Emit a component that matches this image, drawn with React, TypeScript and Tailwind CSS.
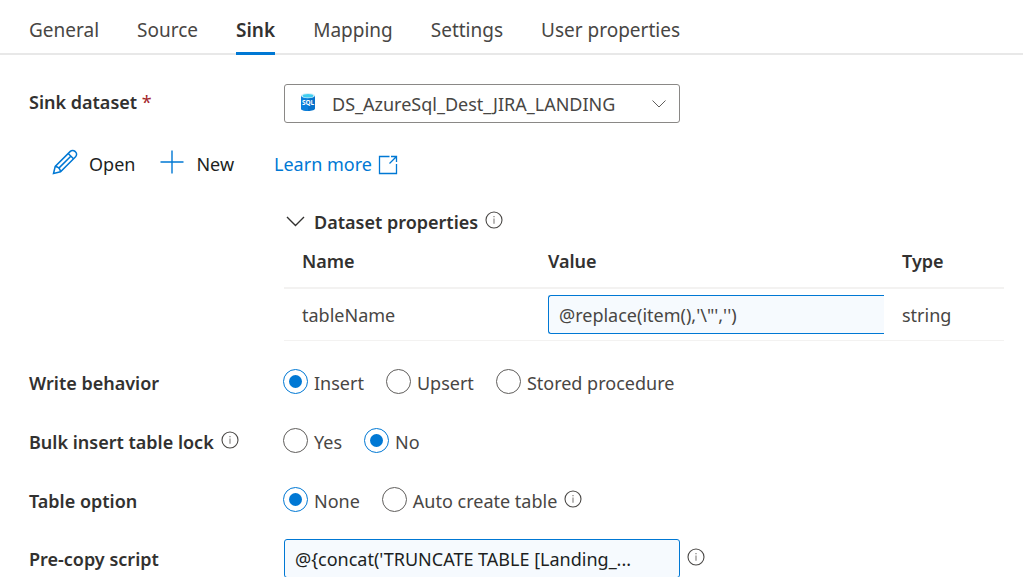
import { useState, type ReactNode } from "react";

const tabs = ["General", "Source", "Sink", "Mapping", "Settings", "User properties"];

function InfoIcon() {
  return (
    <svg viewBox="0 0 18 18" className="mb-[2px] size-[18px] shrink-0" fill="none" aria-hidden="true">
      <circle cx="9" cy="9" r="8" stroke="#4a4846" strokeWidth="1.1" />
      <path d="M9 7.4v5.4" stroke="#8a8886" strokeWidth="1.2" />
      <path d="M9 4.9v1.4" stroke="#8a8886" strokeWidth="1.3" />
    </svg>
  );
}

function SqlIcon() {
  return (
    <svg viewBox="0 0 16 20" className="h-5 w-4" aria-hidden="true">
      <path d="M1 3.5v13C1 18 4 19 8 19s7-1 7-2.5v-13z" fill="#0672cb" />
      <path d="M1 3.5v13C1 18 4 19 8 19V3.5z" fill="#0a7fdc" />
      <ellipse cx="8" cy="3.6" rx="7" ry="2.6" fill="#d9f1fa" />
      <ellipse cx="8" cy="3.7" rx="5.4" ry="1.8" fill="#3fcdf0" />
      <text x="8" y="13.2" textAnchor="middle" fontSize="6.4" fontWeight="700" fill="#fff" fontFamily="Open Sans, sans-serif">
        SQL
      </text>
    </svg>
  );
}

function PencilIcon() {
  return (
    <svg viewBox="0 0 26 26" className="mb-1 size-[26px]" fill="none" stroke="#0078d4" strokeWidth="1.5" aria-hidden="true">
      <path d="M1.5 24.5l1.7-7L18.3 2.4a3.3 3.3 0 0 1 4.7 0l.6.6a3.3 3.3 0 0 1 0 4.7L8.5 22.8z" />
      <path d="M3.2 17.5c2.8.2 5 2.5 5.3 5.3M16.2 4.5l5.3 5.3M18.8 7.2L6.3 19.6" />
    </svg>
  );
}

function PlusIcon() {
  return (
    <svg viewBox="0 0 24 24" className="mb-[5px] size-6" stroke="#0078d4" strokeWidth="1.4" aria-hidden="true">
      <path d="M12 .5v23M.5 12h23" />
    </svg>
  );
}

function ExternalIcon() {
  return (
    <svg viewBox="0 0 20 20" className="mt-[2px] size-5" fill="none" stroke="#0078d4" strokeWidth="1.3" aria-hidden="true">
      <path d="M11.5 1.5h-10v17h17v-9.500M13 1.500h5.500v5.500M18.500 1.500l-7 7" />
    </svg>
  );
}

type FieldProps = {
  label: string;
  info?: boolean;
  children: ReactNode;
};

function RadioField({ label, info = false, children }: FieldProps) {
  return (
    <fieldset className="flex h-[26px] items-center">
      <legend className="float-left flex w-[254px] shrink-0 items-center gap-[7px] font-semibold">
        <span className="pt-[2px]">{label}</span>
        {info && <InfoIcon />}
      </legend>
      <div className="flex items-center gap-[22px]">{children}</div>
    </fieldset>
  );
}

type RadioProps = {
  name: string;
  label: string;
  value: string;
  onChange: (value: string) => void;
};

function Radio({ name, label, value, onChange }: RadioProps) {
  return (
    <label className="flex items-center gap-[6px] text-[#484644]">
      <input
        type="radio"
        name={name}
        checked={value === label}
        onChange={() => onChange(label)}
        className="grid size-[25px] shrink-0 appearance-none place-content-center rounded-full border border-[#605e5c] before:size-[13px] before:rounded-full checked:border-[#0078d4] checked:before:bg-[#0078d4]"
      />
      <span className="pt-[2px]">{label}</span>
    </label>
  );
}

export default function App() {
  const [activeTab, setActiveTab] = useState("Sink");
  const [tableName, setTableName] = useState(`@replace(item(),'\\"','')`);
  const [writeBehavior, setWriteBehavior] = useState("Insert");
  const [tableLock, setTableLock] = useState("No");
  const [tableOption, setTableOption] = useState("None");
  const [script, setScript] = useState("@{concat('TRUNCATE TABLE [Landing_...");

  return (
    <div className="bg-white font-['Noto_Sans','Open_Sans',sans-serif] text-[18px] leading-6 text-[#323130]">
      {/* Tabs */}
      <nav className="flex h-[55px] gap-[38px] border-b-2 border-[#e8e8e8] pl-[29px] text-[19px]" role="tablist">
        {tabs.map((tab) => (
          <button
            key={tab}
            role="tab"
            aria-selected={tab === activeTab}
            onClick={() => setActiveTab(tab)}
            className={
              tab === activeTab
                ? "-mb-[2px] border-b-3 border-[#0078d4] pt-2 font-semibold"
                : "-mb-[2px] border-b-3 border-transparent pt-2 text-[#484644]"
            }
          >
            {tab}
          </button>
        ))}
      </nav>

      <main className="pt-[29px] pr-[19px] pl-[29px]">
        {/* Dataset */}
        <div className="flex items-center">
          <label htmlFor="dataset" className="w-[255px] shrink-0 pb-1 font-semibold">
            Sink dataset <span className="font-normal text-[#a4262c]">*</span>
          </label>
          <div className="relative w-[396px]">
            <select
              id="dataset"
              className="h-[39px] w-full appearance-none rounded-[3px] border border-[#8a8886] bg-white pr-10 pl-[47px] text-[#484644]"
            >
              <option>DS_AzureSql_Dest_JIRA_LANDING</option>
            </select>
            <span className="pointer-events-none absolute top-2 left-4">
              <SqlIcon />
            </span>
            <svg viewBox="0 0 14 8" className="pointer-events-none absolute top-4 right-[14px] h-2 w-[14px]" fill="none" stroke="#605e5c" aria-hidden="true">
              <path d="M.5.5L7 7 13.5.5" />
            </svg>
          </div>
        </div>

        <div className="mt-[26px] flex h-[30px] items-center pl-[23px] text-[#201f1e]">
          <button className="flex items-center gap-[11px]">
            <PencilIcon />
            Open
          </button>
          <button className="ml-[25px] flex items-center gap-3">
            <PlusIcon />
            New
          </button>
          <a href="#learn" className="ml-10 flex items-center gap-[6px] text-[#0078d4]">
            Learn more
            <ExternalIcon />
          </a>
        </div>

        {/* Dataset properties */}
        <section className="mt-[29px] ml-[255px]">
          <div className="flex items-center gap-[7px]">
            <button className="flex items-center gap-[9px] pl-[2px] font-semibold" aria-expanded="true">
              <svg viewBox="0 0 19 11" className="h-[11px] w-[19px]" fill="none" stroke="#323130" strokeWidth="1.4" aria-hidden="true">
                <path d="M1 1l8.5 8.500L18 1" />
              </svg>
              <span className="pt-[2px]">Dataset properties</span>
            </button>
            <InfoIcon />
          </div>
          <table className="mt-px w-full table-fixed text-left">
            <thead>
              <tr className="h-[53px] border-b-2 border-[#f3f2f1]">
                <th className="w-[246px] pl-[18px] font-semibold">Name</th>
                <th className="w-[354px] pl-[18px] font-semibold">Value</th>
                <th className="pl-[18px] font-semibold">Type</th>
              </tr>
            </thead>
            <tbody>
              <tr className="h-[52px] border-b border-[#f3f2f1] text-[#484644]">
                <td className="pt-[2px] pl-[18px]">tableName</td>
                <td className="pl-[18px]">
                  <input
                    aria-label="tableName value"
                    value={tableName}
                    onChange={(e) => setTableName(e.target.value)}
                    className="block h-[39px] w-full rounded-l-[3px] border border-r-0 border-[#0078d4] bg-[#f6fafe] px-[10px] pt-[2px]"
                  />
                </td>
                <td className="pt-[2px] pl-[18px]">string</td>
              </tr>
            </tbody>
          </table>
        </section>

        {/* Copy options */}
        <div className="mt-7 flex flex-col gap-[33px]">
          <RadioField label="Write behavior">
            <Radio name="behavior" label="Insert" value={writeBehavior} onChange={setWriteBehavior} />
            <Radio name="behavior" label="Upsert" value={writeBehavior} onChange={setWriteBehavior} />
            <Radio name="behavior" label="Stored procedure" value={writeBehavior} onChange={setWriteBehavior} />
          </RadioField>
          <RadioField label="Bulk insert table lock" info>
            <Radio name="lock" label="Yes" value={tableLock} onChange={setTableLock} />
            <Radio name="lock" label="No" value={tableLock} onChange={setTableLock} />
          </RadioField>
          <RadioField label="Table option">
            <Radio name="option" label="None" value={tableOption} onChange={setTableOption} />
            <div className="flex items-center gap-[7px]">
              <Radio name="option" label="Auto create table" value={tableOption} onChange={setTableOption} />
              <InfoIcon />
            </div>
          </RadioField>
        </div>

        <div className="mt-[26px] flex items-center">
          <label htmlFor="script" className="w-[255px] shrink-0 pt-[2px] font-semibold">
            Pre-copy script
          </label>
          <input
            id="script"
            value={script}
            onChange={(e) => setScript(e.target.value)}
            className="mr-[7px] h-[39px] w-[396px] rounded-[3px] border border-[#0078d4] bg-[#f6fafe] px-[10px] pt-[2px] text-[#201f1e]"
          />
          <InfoIcon />
        </div>
      </main>
    </div>
  );
}
